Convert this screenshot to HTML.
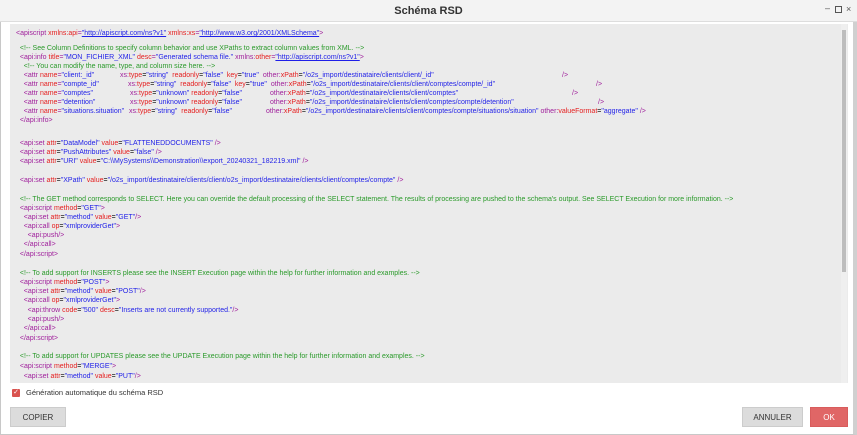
<!DOCTYPE html>
<html><head><meta charset="utf-8"><style>
*{margin:0;padding:0;box-sizing:border-box}
body{width:857px;height:435px;background:#fff;font-family:"Liberation Sans",sans-serif;position:relative;overflow:hidden}
.frame{position:absolute;left:0;top:0;width:857px;height:435px;border:1px solid #c8c8c8;border-right:4px solid #d0d0d0}
.title{position:absolute;left:0;top:0;width:857px;height:22px;background:#f3f3f3;border-bottom:1px solid #ddd;text-align:center;font-weight:bold;font-size:11px;line-height:22px;color:#333}
.ctl{position:absolute;top:4px;font-size:9px;color:#555}
.code{position:absolute;left:10px;top:24px;width:838px;height:359px;background:#ebebeb;overflow:hidden}
.sb{position:absolute;left:841px;top:24px;width:6px;height:359px;background:#efefef}
.th{position:absolute;left:842px;top:30px;width:4px;height:242px;background:#bdbdbd}
.l{position:absolute;left:6px;font-size:7px;white-space:pre;height:9px;line-height:9px}
.t{color:#a0209c}.a{color:#e52020}.v{color:#1f1fe8}.c{color:#2a9a2a}.u{text-decoration:underline}
.s{position:absolute;top:0;white-space:pre}
.btn{position:absolute;top:407px;height:20px;font-size:8px;line-height:20px;text-align:center;color:#333;background:#dcdcdc;border:1px solid #ccc}
</style></head><body>
<div class="frame"></div>
<div class="title">Schéma RSD</div>
<div class="ctl" style="left:825px;top:3px">&#8211;</div>
<div class="ctl" style="left:835px;width:7px;height:7px;border:1px solid #555;top:6px"></div>
<div class="ctl" style="left:846px;top:4px">×</div>
<div class="code">
<div class="l" style="top:5px"><span class="t">&lt;apiscript </span><span class="a">xmlns:api</span><span class="t">=</span><span class="v u">"http://apiscript.com/ns?v1"</span><span class="t"> </span><span class="a">xmlns:xs</span><span class="t">=</span><span class="v u">"http://www.w3.org/2001/XMLSchema"</span><span class="t">&gt;</span></div>
<div class="l c" style="top:20px">  &lt;!-- See Column Definitions to specify column behavior and use XPaths to extract column values from XML. --&gt;</div>
<div class="l" style="top:29px"><span class="t">  &lt;api:info </span><span class="a">title</span><span class="t">=</span><span class="v">"MON_FICHIER_XML"</span> <span class="a">desc</span><span class="t">=</span><span class="v">"Generated schema file."</span> <span class="t">xmlns:</span><span class="a">other</span><span class="t">=</span><span class="v u">"http://apiscript.com/ns?v1"</span><span class="t">&gt;</span></div>
<div class="l c" style="top:38px">    &lt;!-- You can modify the name, type, and column size here. --&gt;</div>
<div class="l" style="top:47px;width:700px"><span class="t">    &lt;attr </span><span class="a">name</span><span class="t">=</span><span class="v">"client:_id"</span><span class="s" style="left:104px"><span class="t">xs:</span><span class="a">type</span>=<span class="v">"string"</span>  <span class="a">readonly</span>=<span class="v">"false"</span>  <span class="a">key</span>=<span class="v">"true"</span>  <span class="t">other:</span><span class="a">xPath</span>=<span class="v">"/o2s_import/destinataire/clients/client/_id"</span></span><span class="s t" style="left:546px">/&gt;</span></div>
<div class="l" style="top:56px;width:700px"><span class="t">    &lt;attr </span><span class="a">name</span><span class="t">=</span><span class="v">"compte_id"</span><span class="s" style="left:112px"><span class="t">xs:</span><span class="a">type</span>=<span class="v">"string"</span>  <span class="a">readonly</span>=<span class="v">"false"</span>  <span class="a">key</span>=<span class="v">"true"</span>  <span class="t">other:</span><span class="a">xPath</span>=<span class="v">"/o2s_import/destinataire/clients/client/comptes/compte/_id"</span></span><span class="s t" style="left:580px">/&gt;</span></div>
<div class="l" style="top:65px;width:700px"><span class="t">    &lt;attr </span><span class="a">name</span><span class="t">=</span><span class="v">"comptes"</span><span class="s" style="left:114px"><span class="t">xs:</span><span class="a">type</span>=<span class="v">"unknown"</span> <span class="a">readonly</span>=<span class="v">"false"</span></span><span class="s" style="left:254px"><span class="t">other:</span><span class="a">xPath</span>=<span class="v">"/o2s_import/destinataire/clients/client/comptes"</span></span><span class="s t" style="left:556px">/&gt;</span></div>
<div class="l" style="top:74px;width:700px"><span class="t">    &lt;attr </span><span class="a">name</span><span class="t">=</span><span class="v">"detention"</span><span class="s" style="left:114px"><span class="t">xs:</span><span class="a">type</span>=<span class="v">"unknown"</span> <span class="a">readonly</span>=<span class="v">"false"</span></span><span class="s" style="left:254px"><span class="t">other:</span><span class="a">xPath</span>=<span class="v">"/o2s_import/destinataire/clients/client/comptes/compte/detention"</span></span><span class="s t" style="left:582px">/&gt;</span></div>
<div class="l" style="top:83px;width:700px"><span class="t">    &lt;attr </span><span class="a">name</span><span class="t">=</span><span class="v">"situations.situation"</span><span class="s" style="left:113px"><span class="t">xs:</span><span class="a">type</span>=<span class="v">"string"</span>  <span class="a">readonly</span>=<span class="v">"false"</span></span><span class="s" style="left:250px"><span class="t">other:</span><span class="a">xPath</span>=<span class="v">"/o2s_import/destinataire/clients/client/comptes/compte/situations/situation"</span> <span class="t">other:</span><span class="a">valueFormat</span>=<span class="v">"aggregate"</span> <span class="t">/&gt;</span></span></div>
<div class="l t" style="top:92px">  &lt;/api:info&gt;</div>
<div class="l" style="top:115px"><span class="t">  &lt;api:set </span><span class="a">attr</span>=<span class="v">"DataModel"</span> <span class="a">value</span>=<span class="v">"FLATTENEDDOCUMENTS"</span> <span class="t">/&gt;</span></div>
<div class="l" style="top:124px"><span class="t">  &lt;api:set </span><span class="a">attr</span>=<span class="v">"PushAttributes"</span> <span class="a">value</span>=<span class="v">"false"</span> <span class="t">/&gt;</span></div>
<div class="l" style="top:133px"><span class="t">  &lt;api:set </span><span class="a">attr</span>=<span class="v">"URI"</span> <span class="a">value</span>=<span class="v">"C:\\MySystems\\Demonstration\\export_20240321_182219.xml"</span> <span class="t">/&gt;</span></div>
<div class="l" style="top:152px"><span class="t">  &lt;api:set </span><span class="a">attr</span>=<span class="v">"XPath"</span> <span class="a">value</span>=<span class="v">"/o2s_import/destinataire/clients/client/o2s_import/destinataire/clients/client/comptes/compte"</span> <span class="t">/&gt;</span></div>
<div class="l c" style="top:171px">  &lt;!-- The GET method corresponds to SELECT. Here you can override the default processing of the SELECT statement. The results of processing are pushed to the schema's output. See SELECT Execution for more information. --&gt;</div>
<div class="l" style="top:180px"><span class="t">  &lt;api:script </span><span class="a">method</span>=<span class="v">"GET"</span><span class="t">&gt;</span></div>
<div class="l" style="top:189px"><span class="t">    &lt;api:set </span><span class="a">attr</span>=<span class="v">"method"</span> <span class="a">value</span>=<span class="v">"GET"</span><span class="t">/&gt;</span></div>
<div class="l" style="top:198px"><span class="t">    &lt;api:call </span><span class="a">op</span>=<span class="v">"xmlproviderGet"</span><span class="t">&gt;</span></div>
<div class="l t" style="top:207px">      &lt;api:push/&gt;</div>
<div class="l t" style="top:216px">    &lt;/api:call&gt;</div>
<div class="l t" style="top:226px">  &lt;/api:script&gt;</div>
<div class="l c" style="top:245px">  &lt;!-- To add support for INSERTS please see the INSERT Execution page within the help for further information and examples. --&gt;</div>
<div class="l" style="top:254px"><span class="t">  &lt;api:script </span><span class="a">method</span>=<span class="v">"POST"</span><span class="t">&gt;</span></div>
<div class="l" style="top:263px"><span class="t">    &lt;api:set </span><span class="a">attr</span>=<span class="v">"method"</span> <span class="a">value</span>=<span class="v">"POST"</span><span class="t">/&gt;</span></div>
<div class="l" style="top:272px"><span class="t">    &lt;api:call </span><span class="a">op</span>=<span class="v">"xmlproviderGet"</span><span class="t">&gt;</span></div>
<div class="l" style="top:282px"><span class="t">      &lt;api:throw </span><span class="a">code</span>=<span class="v">"500"</span> <span class="a">desc</span>=<span class="v">"Inserts are not currently supported."</span><span class="t">/&gt;</span></div>
<div class="l t" style="top:291px">      &lt;api:push/&gt;</div>
<div class="l t" style="top:300px">    &lt;/api:call&gt;</div>
<div class="l t" style="top:310px">  &lt;/api:script&gt;</div>
<div class="l c" style="top:328px">  &lt;!-- To add support for UPDATES please see the UPDATE Execution page within the help for further information and examples. --&gt;</div>
<div class="l" style="top:338px"><span class="t">  &lt;api:script </span><span class="a">method</span>=<span class="v">"MERGE"</span><span class="t">&gt;</span></div>
<div class="l" style="top:348px"><span class="t">    &lt;api:set </span><span class="a">attr</span>=<span class="v">"method"</span> <span class="a">value</span>=<span class="v">"PUT"</span><span class="t">/&gt;</span></div>
</div>
<div class="sb"></div><div class="th"></div>
<div style="position:absolute;left:12px;top:389px;width:8px;height:8px;background:#d9534f;border-radius:1px;color:#fff;font-size:7px;line-height:8px;text-align:center">✓</div>
<div style="position:absolute;left:26px;top:388px;font-size:7.5px;color:#333">Génération automatique du schéma RSD</div>
<div class="btn" style="left:10px;width:56px">COPIER</div>
<div class="btn" style="left:742px;width:61px">ANNULER</div>
<div class="btn" style="left:810px;width:38px;background:#e06666;border-color:#d85c5c;color:#fff">OK</div>
</body></html>
